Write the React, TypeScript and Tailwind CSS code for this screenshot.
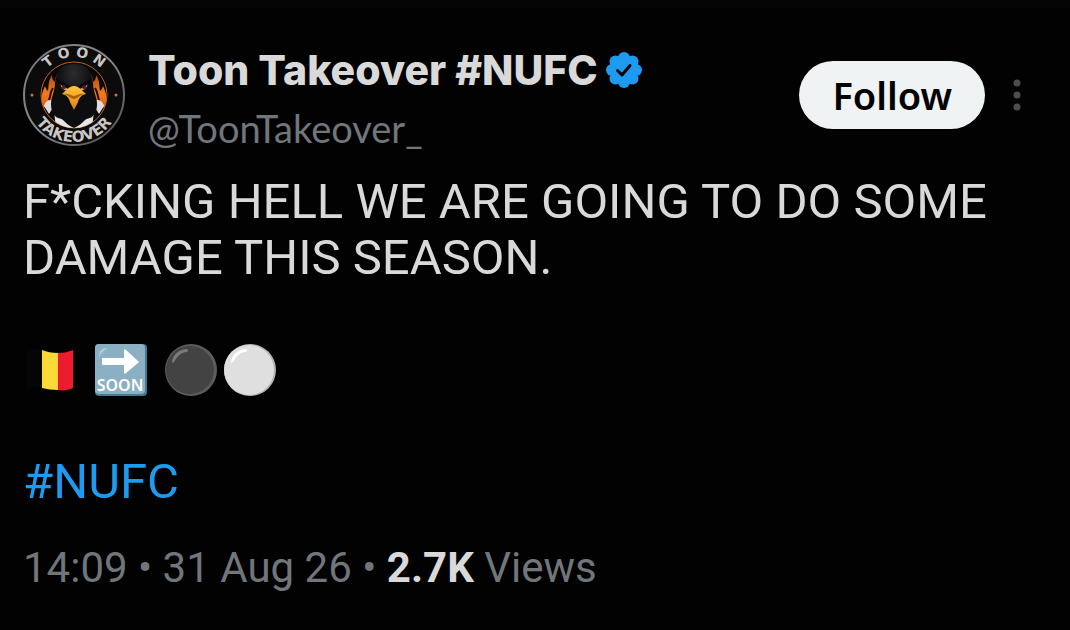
import React from 'react';

function Avatar() {
  return (
    <svg viewBox="0 0 102 102" className="size-[102px] shrink-0" role="img" aria-label="Toon Takeover logo">
      <defs>
        <linearGradient id="rim" x1="0" y1="0" x2="1" y2="1">
          <stop offset="0" stopColor="#777" />
          <stop offset="0.5" stopColor="#8b8b8b" />
          <stop offset="1" stopColor="#4a4a4a" />
        </linearGradient>
        <linearGradient id="flame" x1="0" y1="0" x2="0" y2="1">
          <stop offset="0" stopColor="#a43d0e" />
          <stop offset="0.6" stopColor="#f47a1c" />
          <stop offset="1" stopColor="#d9591a" />
        </linearGradient>
        <linearGradient id="beak" x1="0" y1="0" x2="0" y2="1">
          <stop offset="0" stopColor="#ffc53a" />
          <stop offset="1" stopColor="#e07f10" />
        </linearGradient>
        <radialGradient id="head" cx="0.5" cy="0.15" r="0.4">
          <stop offset="0" stopColor="#2c2c2f" />
          <stop offset="1" stopColor="#0d0d0f" />
        </radialGradient>
        <clipPath id="inner">
          <circle cx="51" cy="51" r="33" />
        </clipPath>
        <path id="topArc" d="M13 51a38 38 0 0 1 76 0" />
        <path id="bottomArc" d="M4 51a47 47 0 0 0 94 0" />
      </defs>
      <circle cx="51" cy="51" r="50" fill="#0b0b0c" stroke="url(#rim)" strokeWidth="2" />
      <circle cx="51" cy="51" r="33" fill="#0a0909" stroke="#b8632a" strokeWidth="1" />
      <g clipPath="url(#inner)">
        <path d="M20 63c-3-8-1-15 2-21 1 3 2 4 3 5 1-6 0-10 4-16 0 4 1 5 3 7 0-5 2-9 6-12l-1 12-3 18-5 9z" fill="url(#flame)" />
        <path d="M82 63c3-8 1-15-2-21-1 3-2 4-3 5-1-6 0-10-4-16 0 4-1 5-3 7 0-5-2-9-6-12l1 12 3 18 5 9z" fill="url(#flame)" />
        <path d="M26 56c2-5 1-8 4-12M76 56c-2-5-1-8-4-12" stroke="#1a0b05" strokeWidth="2" fill="none" />
        <path d="M21 62c1-4 4-6 7-6l3 6-5 8z" fill="#dcdcdc" />
        <path d="M81 62c-1-4-4-6-7-6l-3 6 5 8z" fill="#dcdcdc" />
        <path d="M31 67l2 17h36l2-17z" fill="#e6e6e6" />
        <path d="M51 20c-12 0-18 7-19 19 0 8-4 14-4 21 0 6 2 10 5 13 3 2 5 1 7 3 3 3 6 6 11 8 5-2 8-5 11-8 2-2 4-1 7-3 3-3 5-7 5-13 0-7-4-13-4-21-1-12-7-19-19-19z" fill="url(#head)" />
        <path d="M37 38l10 6-1 3c-5 0-9-4-9-9zM65 38l-10 6 1 3c5 0 9-4 9-9z" fill="#c9a69d" />
        <path d="M34 35l14 8-1 3-11-6zM68 35l-14 8 1 3 11-6z" fill="#050505" />
        <circle cx="41" cy="43" r="2" fill="#5e1410" />
        <circle cx="61" cy="43" r="2" fill="#5e1410" />
        <path d="M51 42c5 0 7 4 12 8-5 1-7 4-8 8-1 3-3 5-4 8-1-3-3-5-4-8-1-4-3-7-8-8 5-4 7-8 12-8z" fill="url(#beak)" />
        <path d="M41 50c4-1 7 2 10 2s6-3 10-2c-4 1-7 5-10 5s-6-4-10-5z" fill="#b55c0b" />
      </g>
      <circle cx="9" cy="51" r="1.500" fill="#c8772e" />
      <circle cx="93" cy="51" r="1.500" fill="#c8772e" />
      <g fill="#c9c5c1" fontFamily="'DejaVu Sans', sans-serif" fontWeight="700" textAnchor="middle">
        <text fontSize="14">
          <textPath href="#topArc" startOffset="50%">T O O N</textPath>
        </text>
        <text fontSize="15">
          <textPath href="#bottomArc" startOffset="50%">TAKEOVER</textPath>
        </text>
      </g>
    </svg>
  );
}

function VerifiedBadge() {
  return (
    <svg viewBox="0 0 36 36" className="size-9 shrink-0" role="img" aria-label="Verified account">
      <g fill="#1d9bf0">
        <circle cx="18" cy="18" r="14" />
        <circle cx="18" cy="6" r="6" />
        <circle cx="26.500" cy="9.500" r="6" />
        <circle cx="30" cy="18" r="6" />
        <circle cx="26.500" cy="26.500" r="6" />
        <circle cx="18" cy="30" r="6" />
        <circle cx="9.500" cy="26.500" r="6" />
        <circle cx="6" cy="18" r="6" />
        <circle cx="9.500" cy="9.500" r="6" />
      </g>
      <path d="M11.500 18.500l4.500 4.500 8-9.500" fill="none" stroke="#020202" strokeWidth="3" strokeLinecap="round" strokeLinejoin="round" />
    </svg>
  );
}

function BelgiumFlag() {
  return (
    <svg viewBox="0 0 52 52" className="size-[52px]" role="img" aria-label="Flag of Belgium">
      <path d="M4 7c6-3 10-2 15-1v39c-5-2-9-3-15 0z" fill="#050505" />
      <path d="M19 6c5 2 10 3 16 3v37c-6 0-11-1-16-2z" fill="#fbd936" />
      <path d="M35 9c6 0 10-1 15-3v38c-5 2-9 3-15 2z" fill="#ec1c2e" />
    </svg>
  );
}

function SoonEmoji() {
  return (
    <svg viewBox="0 0 52 52" className="size-[52px]" role="img" aria-label="Soon">
      <rect width="52" height="52" rx="4" fill="#447b91" />
      <rect width="50" height="50" rx="4" fill="#8bb0c3" />
      <path d="M4 13c0-6 3-9 9-9-4 2-7 5-9 9z" fill="#b4d0dc" />
      <path d="M8 14h21V6c0-1 1-1 2 0l12 11c1 1 1 1 0 2L31 29c-1 1-2 1-2 0v-8H8c-1 0-1-1-1-1v-5c0-1 0-1 1-1z" fill="#fff" />
      <text x="25" y="47" textAnchor="middle" fontFamily="'Noto Sans', sans-serif" fontWeight="600" fontSize="16" fill="#fff">SOON</text>
    </svg>
  );
}

function BlackCircle() {
  return (
    <svg viewBox="0 0 52 52" className="size-[52px]" role="img" aria-label="Black circle">
      <circle cx="26" cy="26" r="26" fill="#5c5c5c" />
      <circle cx="25" cy="26" r="24" fill="#434343" />
      <path d="M7 18C8 10 15 5 22 5c2 1 1 3-1 3-6 1-9 5-12 10-1 1-2 1-2 0z" fill="#7b7b7b" />
    </svg>
  );
}

function WhiteCircle() {
  return (
    <svg viewBox="0 0 52 52" className="size-[52px]" role="img" aria-label="White circle">
      <circle cx="26" cy="26" r="26" fill="#b4b4b4" />
      <circle cx="25" cy="26" r="25" fill="#dfdfdf" />
      <path d="M7 18C8 10 15 5 22 5c2 1 1 3-1 3-6 1-9 5-12 10-1 1-2 1-2 0z" fill="#fff" />
    </svg>
  );
}

function App() {
  return (
    <main className="min-h-screen bg-[#020202] border-t-8 border-[#050505] px-[23px] font-['Roboto',sans-serif] text-[#d9d9d9]">
      <article>
        {/* Author row */}
        <header className="flex items-start pt-9">
          <Avatar />
          <div className="ml-[23px] min-w-0">
            <div className="flex items-center gap-2">
              <h1 className="font-['Inter',sans-serif] text-[41px] leading-[52px] font-extrabold whitespace-nowrap">Toon Takeover #NUFC</h1>
              <VerifiedBadge />
            </div>
            <p className="mt-1.5 font-['Lato',sans-serif] text-[38px] leading-[52px] text-[#71767b]">@ToonTakeover_</p>
          </div>
          <div className="ml-auto mr-[22px] h-[102px] flex items-center">
            <button type="button" className="h-[68px] px-[33px] rounded-full bg-[#eff3f4] text-[#020202] font-['Noto_Sans',sans-serif] text-[38px] leading-[52px] font-semibold">
              Follow
            </button>
            <button type="button" aria-label="More options" className="ml-6 px-1">
              <svg viewBox="0 0 8 34" className="w-2 h-[34px]" fill="#4c4f52">
                <circle cx="4" cy="5" r="3.500" />
                <circle cx="4" cy="17" r="3.500" />
                <circle cx="4" cy="29" r="3.500" />
              </svg>
            </button>
          </div>
        </header>

        {/* Post text */}
        <div className="mt-5 text-[49px] leading-[56px]">
          <p>F*CKING HELL WE ARE GOING TO DO SOME DAMAGE THIS SEASON.</p>
          <div className="mt-[56px] h-[56px] flex items-center">
            <BelgiumFlag />
            <div className="ml-5"><SoonEmoji /></div>
            <div className="ml-[18px] flex gap-[7px]">
              <BlackCircle />
              <WhiteCircle />
            </div>
          </div>
          <p className="mt-[56px]">
            <a href="#nufc" className="text-[#1d9bf0]">#NUFC</a>
          </p>
        </div>

        {/* Time and views */}
        <p className="mt-[30px] text-[42px] leading-[56px] text-[#71767b]">
          14:09 • 31 Aug 26 • <span className="font-bold text-[#d9d9d9]">2.7K</span> Views
        </p>
      </article>
    </main>
  );
}

export default App;
